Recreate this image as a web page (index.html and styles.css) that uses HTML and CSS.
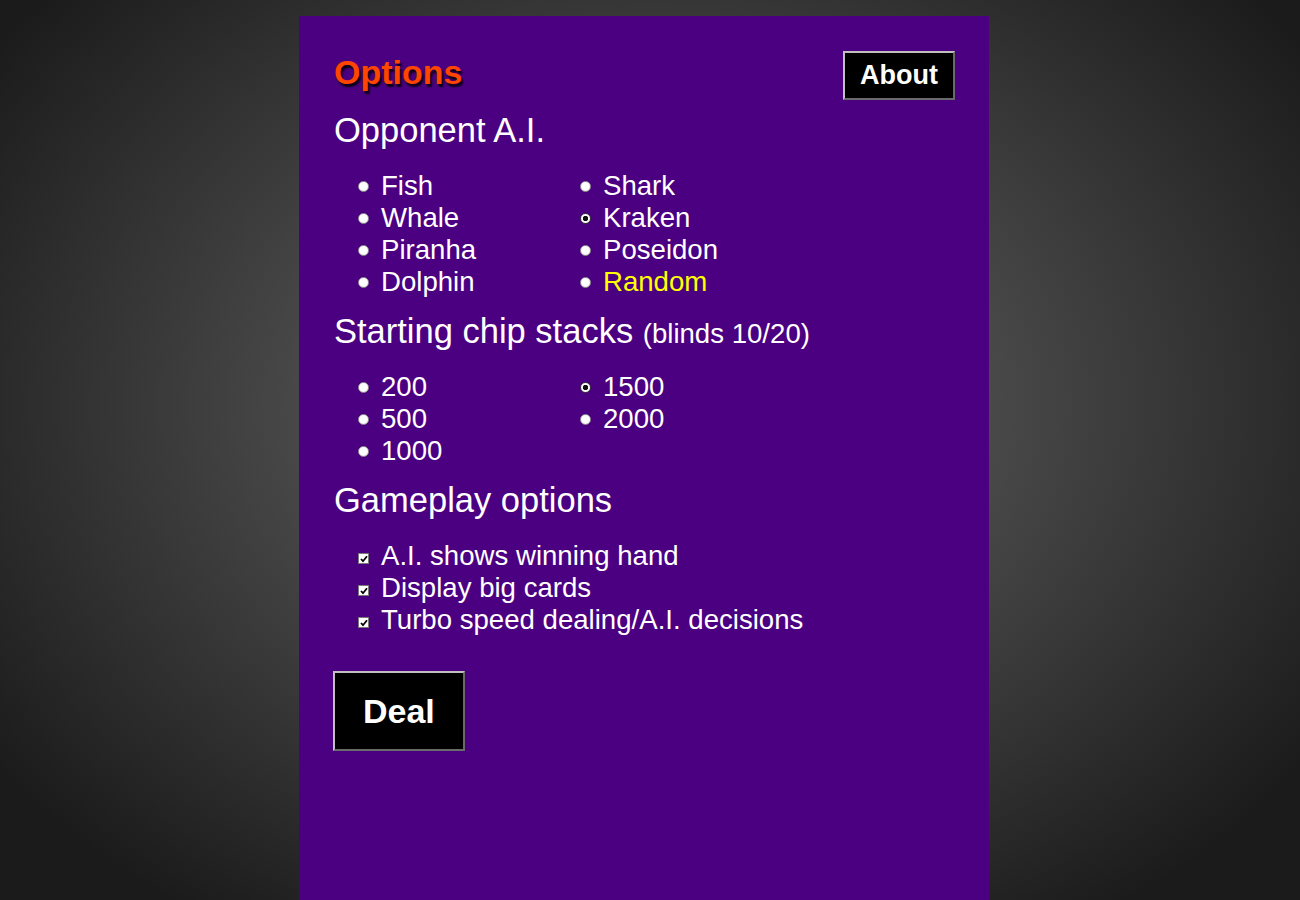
FILE: index.html
```html
<!DOCTYPE html>
<html lang="en">
<head>
  <meta charset="UTF-8">
  <meta name="viewport" content="width=device-width, initial-scale=1.0">
  <title>Poker - Options</title>
  <link rel="stylesheet" href="styles.css">
</head>
<body>

<div class="panel">
  <div class="panel-header">
    <h1 class="title">Options</h1>
    <button class="btn btn-about">About</button>
  </div>

  <h2>Opponent A.I.</h2>
  <ul class="choices rows-4">
    <li><span class="radio"></span>Fish</li>
    <li><span class="radio"></span>Whale</li>
    <li><span class="radio"></span>Piranha</li>
    <li><span class="radio"></span>Dolphin</li>
    <li><span class="radio"></span>Shark</li>
    <li><span class="radio checked"></span>Kraken</li>
    <li><span class="radio"></span>Poseidon</li>
    <li class="random"><span class="radio"></span>Random</li>
  </ul>

  <h2>Starting chip stacks <span class="note">(blinds 10/20)</span></h2>
  <ul class="choices rows-3">
    <li><span class="radio"></span>200</li>
    <li><span class="radio"></span>500</li>
    <li><span class="radio"></span>1000</li>
    <li><span class="radio checked"></span>1500</li>
    <li><span class="radio"></span>2000</li>
  </ul>

  <h2>Gameplay options</h2>
  <ul class="choices single">
    <li><span class="checkbox"><svg viewBox="0 0 8 8" width="8" height="8"><path d="M1 4 L3 6.2 L7 1.2" fill="none" stroke="#000" stroke-width="1.8"/></svg></span>A.I. shows winning hand</li>
    <li><span class="checkbox"><svg viewBox="0 0 8 8" width="8" height="8"><path d="M1 4 L3 6.2 L7 1.2" fill="none" stroke="#000" stroke-width="1.8"/></svg></span>Display big cards</li>
    <li><span class="checkbox"><svg viewBox="0 0 8 8" width="8" height="8"><path d="M1 4 L3 6.2 L7 1.2" fill="none" stroke="#000" stroke-width="1.8"/></svg></span>Turbo speed dealing/A.I. decisions</li>
  </ul>

  <button class="btn btn-deal">Deal</button>
</div>

</body>
</html>
```

FILE: styles.css
```css
body {
  margin: 0;
  min-height: 100vh;
  font-family: 'Liberation Sans', Arial, sans-serif;
  color: #fff;
  background: radial-gradient(ellipse at 50% 45%, #6a6a6a 0%, #1b1b1b 88%);
}

.panel {
  box-sizing: border-box;
  width: 690px;
  min-height: calc(100vh - 16px);
  margin: 16px 0 0 calc(50% - 351px);
  padding: 35px 34px 35px 35px;
  background-color: #4b0082;
}

.panel-header {
  display: flex;
  justify-content: space-between;
  align-items: flex-start;
  margin-bottom: 11px;
}

.title {
  margin: 0;
  padding-top: 2px;
  font-size: 34px;
  line-height: 39px;
  font-weight: bold;
  color: #ff4500;
  text-shadow: 2px 3px 2px rgba(0,0,0,0.85);
}

h2 {
  margin: 0 0 20px;
  font-size: 34.5px;
  line-height: 39px;
  font-weight: normal;
}

h2 .note {
  font-size: 27.6px;
  line-height: 1;
}

.btn {
  font-family: inherit;
  font-weight: bold;
  color: #fff;
  background-color: #000;
  border: 2px solid;
  border-color: #c0c0c0 #6a6a6a #6a6a6a #c0c0c0;
  cursor: pointer;
}

.btn-about {
  font-size: 27px;
  line-height: 45px;
  padding: 0 15px;
}

.btn-deal {
  display: block;
  font-size: 34px;
  line-height: 76px;
  padding: 0 28px;
  margin: 35px 0 0 -1px;
}

.choices {
  list-style: none;
  margin: 0 0 14px;
  padding: 0 0 0 24px;
  font-size: 27.6px;
  line-height: 32px;
  display: grid;
  grid-auto-flow: column;
  grid-template-columns: 222px;
  grid-auto-columns: 222px;
}

.rows-4 { grid-template-rows: repeat(4, 32px); }
.rows-3 { grid-template-rows: repeat(3, 32px); }
.single { grid-auto-flow: row; grid-template-columns: auto; }

.choices li {
  display: flex;
  align-items: center;
  gap: 12px;
  white-space: nowrap;
}

.choices li.random {
  color: #ffff00;
}

.radio {
  flex: none;
  box-sizing: border-box;
  width: 11px;
  height: 11px;
  border-radius: 50%;
  border: 1px solid #9a9a9a;
  background: radial-gradient(circle at 50% 40%, #fff 55%, #e4e4e4 100%);
}

.radio.checked {
  border-color: #3a3a3a;
  background: radial-gradient(circle, #111 0 2.4px, #fff 3px);
}

.checkbox {
  flex: none;
  box-sizing: border-box;
  width: 11px;
  height: 11px;
  margin-top: 5px;
  border: 1px solid #7a7a7a;
  background-color: #fff;
  display: flex;
  align-items: center;
  justify-content: center;
}

.checkbox svg {
  display: block;
}
```
